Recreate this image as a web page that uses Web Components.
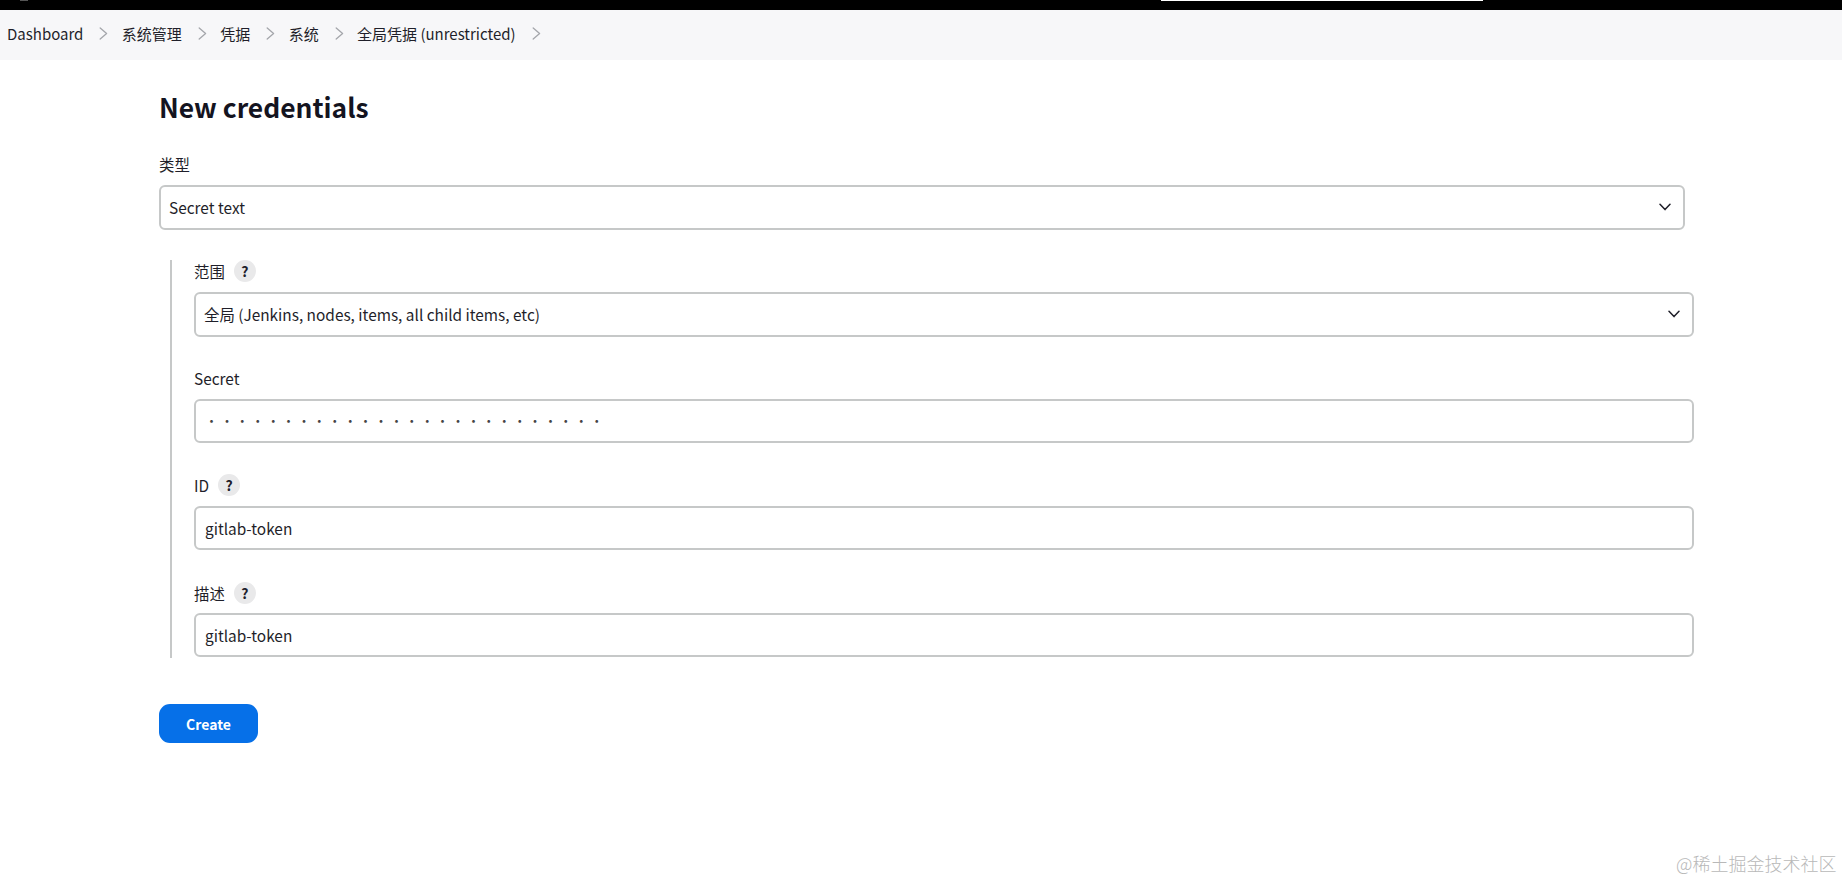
<!DOCTYPE html>
<html lang="zh">
<head>
<meta charset="utf-8">
<title>New credentials</title>
<style>
html,body{margin:0;padding:0;background:#fff;}
body{font-family:"Noto Sans CJK SC","Noto Sans",sans-serif;color:#14141f;font-size:15.4px;width:1842px;height:879px;overflow:hidden;}
</style>
</head>
<body>
<jenkins-page>
  <top-strip slot="top"></top-strip>
  <crumb-bar slot="top">
    <crumb-item>Dashboard</crumb-item>
    <crumb-item>系统管理</crumb-item>
    <crumb-item>凭据</crumb-item>
    <crumb-item>系统</crumb-item>
    <crumb-item>全局凭据 (unrestricted)</crumb-item>
  </crumb-bar>
  <h-title>New credentials</h-title>
  <form-field label="类型" style="--w:1526px;--label-gap:10px">
    <select-box>Secret text</select-box>
  </form-field>
  <field-group>
    <form-field label="范围" help style="--label-gap:10px">
      <select-box>全局 (Jenkins, nodes, items, all child items, etc)</select-box>
    </form-field>
    <form-field label="Secret" style="--mt:30px;--label-gap:10px">
      <text-box dots="26" style="--h:44px"></text-box>
    </form-field>
    <form-field label="ID" help style="--mt:31px;--label-gap:10px">
      <text-box style="--h:44px">gitlab-token</text-box>
    </form-field>
    <form-field label="描述" help style="--mt:32px;--label-gap:9px">
      <text-box style="--h:44px">gitlab-token</text-box>
    </form-field>
  </field-group>
  <primary-button>Create</primary-button>
  <water-mark slot="overlay">@稀土掘金技术社区</water-mark>
</jenkins-page>
<script>
function def(name, html, setup){
  customElements.define(name, class extends HTMLElement{
    constructor(){
      super();
      this.attachShadow({mode:'open'}).innerHTML = typeof html==='function' ? html(this) : html;
    }
    connectedCallback(){
      if(setup && !this._done){ this._done=true; setup(this); }
    }
  });
}
const chevron = '<svg width="12" height="8" viewBox="0 0 12 8" fill="none" stroke="#20202a" stroke-width="1.5" stroke-linecap="round" stroke-linejoin="round"><path d="M1 1.2 6 6.6 11 1.2"/></svg>';

def('jenkins-page', `<style>
:host{display:block;position:relative;width:1842px;height:879px;background:#fff;}
main{display:flex;flex-direction:column;align-items:flex-start;padding:0 0 0 159px;}
</style><slot name="top"></slot><main><slot></slot></main><slot name="overlay"></slot>`);

def('top-strip', `<style>
:host{display:block;height:10px;background:#000;position:relative;}
i{position:absolute;top:0;left:1161px;width:322px;height:1px;background:#fff;}
b{position:absolute;top:0;left:20px;width:8px;height:1px;background:#555;}
</style><b></b><i></i>`);

def('crumb-bar', `<style>
:host{display:flex;align-items:center;height:50px;background:#f7f7f9;padding-left:7px;}
</style><slot></slot>`);

def('crumb-item', `<style>
:host{display:flex;align-items:center;font-size:15px;color:#1f1f2a;white-space:nowrap;position:relative;top:-2px;}
svg{margin:0 13.4px 0 16px;flex:none;}
</style><slot></slot><svg width="9" height="13" viewBox="0 0 9 13" fill="none" stroke="#a4a6ab" stroke-width="1.3" stroke-linecap="round" stroke-linejoin="round"><path d="M1.2 1 7.6 6.5 1.2 12"/></svg>`);

def('h-title', `<style>
:host{display:block;font-size:26.4px;line-height:40px;font-weight:700;color:#14141f;margin-top:27px;margin-bottom:26px;white-space:nowrap;}
</style><slot></slot>`);

def('form-field', h=>`<style>
:host{display:block;width:var(--w,1500px);margin-top:var(--mt,0);}
.l{display:flex;align-items:center;height:22px;margin-bottom:var(--label-gap,10px);font-size:15.4px;color:#1f1f2a;white-space:nowrap;}
</style><div class="l"><span>${h.getAttribute('label')}</span>${h.hasAttribute('help')?'<help-dot></help-dot>':''}</div><slot></slot>`);

def('help-dot', `<style>
:host{display:inline-flex;align-items:center;justify-content:center;width:22px;height:22px;border-radius:50%;background:#e9e9ea;margin-left:9px;font-size:14px;font-weight:700;color:#20202a;line-height:1;}
</style>?`);

def('select-box', `<style>
:host{display:flex;align-items:center;justify-content:space-between;box-sizing:border-box;height:45px;border:2px solid #c6c8c8;border-radius:6px;background:#fff;padding:0 12px 2px 8px;font-size:15.4px;color:#1f1f2a;white-space:nowrap;}
svg{flex:none;}
</style><slot></slot>${chevron}`);

def('text-box', `<style>
:host{display:flex;align-items:center;box-sizing:border-box;height:var(--h,44px);border:2px solid #c6c8c8;border-radius:6px;background:#fff;padding:0 0 0 9px;font-size:15.4px;color:#1f1f2a;white-space:nowrap;}
span{display:flex;position:relative;top:-1px;}
span i{font-style:normal;width:15.42px;flex:none;line-height:1;color:#444;font-size:13px;box-sizing:border-box;}
</style><span id="d"></span><slot></slot>`, h=>{
  const n=+h.getAttribute('dots')||0;
  h.shadowRoot.getElementById('d').innerHTML='<i>·</i>'.repeat(n);
});

def('field-group', `<style>
:host{display:block;margin:30px 0 46px 11px;border-left:2px solid #c6c8c8;padding:0 0 1px 22px;}
</style><slot></slot>`);

def('primary-button', `<style>
:host{display:flex;align-items:center;justify-content:center;width:99px;height:39px;border-radius:11px;background:#0670e8;color:#fff;font-size:14px;font-weight:700;}
</style><slot></slot>`);

def('water-mark', `<style>
:host{position:absolute;left:1676px;top:852px;font-size:18px;line-height:22px;color:#b8b8b8;white-space:nowrap;font-family:"Noto Sans CJK SC",sans-serif;font-weight:300;}
</style><slot></slot>`);
</script>
</body>
</html>
